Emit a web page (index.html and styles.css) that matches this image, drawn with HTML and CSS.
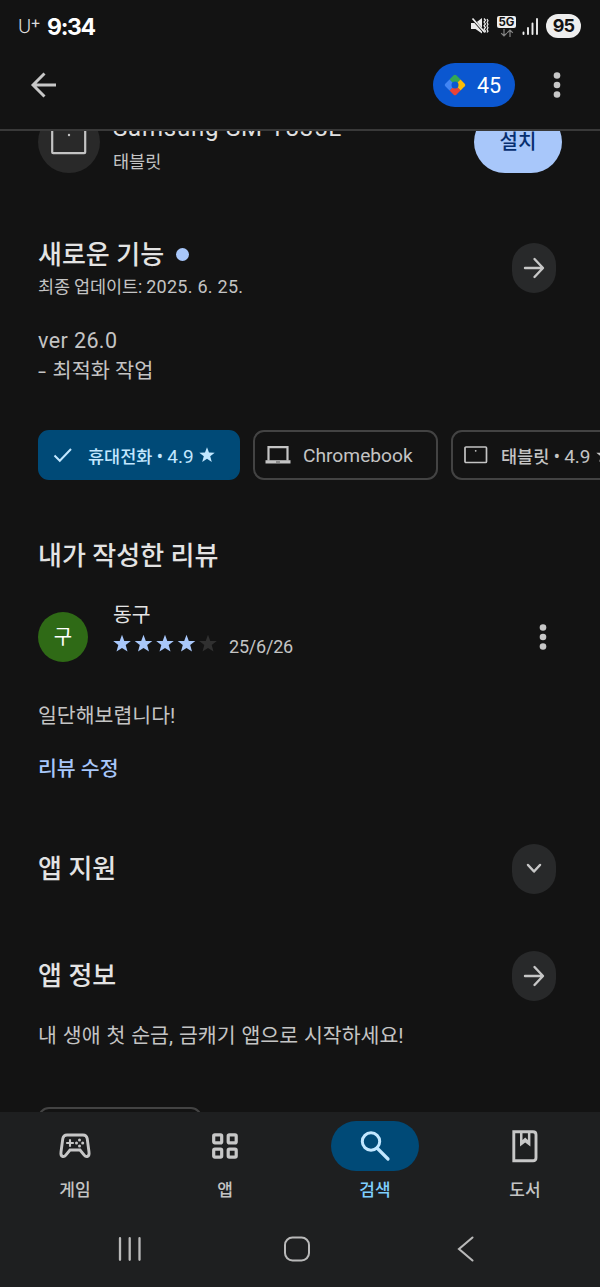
FILE: index.html
```html
<!DOCTYPE html>
<html lang="ko">
<head>
<meta charset="utf-8">
<title>Play 스토어</title>
<link rel="stylesheet" href="styles.css">
</head>
<body>
<header class="status">
  <span class="carrier">U<span class="plus">+</span></span>
  <span class="clock">9:34</span>
  <span class="grow"></span>
  <svg class="mute" width="18" height="18" viewBox="0 0 18 18"><path d="M0 6h4.500L11 1v15.500L4.500 12H0z" fill="#eee"/><path d="M0 0l12.500 14.500" stroke="#131313" stroke-width="2.600"/><path d="M1.500 1.500l12 13.500" stroke="#eee" stroke-width="1.700"/><path d="M13 1.500l1.500 1.800-1.500 1.800 1.500 1.800L13 8.700l1.500 1.800-1.500 1.800 1.500 1.800-1 1.500M16 2l1 1.700-1 1.800 1 1.700L16 9l1 1.700-1 1.800 1 1.700-1 1.300" fill="none" stroke="#eee" stroke-width="1.200"/></svg>
  <span class="net"><span class="net-label">5G</span><svg width="14" height="8" viewBox="0 0 14 8"><path d="M4 0v7M1.200 4.200L4 7l2.800-2.800M10 8V1M7.200 3.800L10 1l2.800 2.800" fill="none" stroke="#858585" stroke-width="1.200"/></svg></span>
  <svg class="signal" width="17" height="17" viewBox="0 0 17 17"><path d="M1.500 14.500v1.500M6 10v6M10.500 5.500V16M15 1v15" stroke="#eee" stroke-width="1.900" stroke-linecap="round"/></svg>
  <span class="battery">95</span>
</header>
<div class="toolbar">
  <svg width="28" height="28" viewBox="0 0 28 28"><path d="M26 14H3M14.500 2.500L3 14l11.500 11.500" fill="none" stroke="#c7c7c7" stroke-width="2.900"/></svg>
  <span class="grow"></span>
  <span class="points">
    <svg width="22" height="22" viewBox="0 0 22 22"><path d="M5.500 5.500L9.700 1.300q1.300-1.300 2.600 0l4.200 4.200L11 11z" fill="#34a853"/><path d="M16.500 5.500l4.200 4.200q1.300 1.300 0 2.600l-4.200 4.200L11 11z" fill="#fbbc04"/><path d="M16.500 16.500l-4.200 4.200q-1.300 1.300-2.600 0l-4.200-4.200L11 11z" fill="#ea4335"/><path d="M5.500 16.500l-4.200-4.200q-1.300-1.300 0-2.600l4.200-4.200L11 11z" fill="#4285f4"/><circle cx="11" cy="11" r="3.500" fill="#0b57d0"/></svg>
    <span>45</span>
  </span>
  <svg class="more" width="8" height="26" viewBox="0 0 8 26"><g fill="#c7c7c7"><circle cx="4" cy="3.500" r="3.300"/><circle cx="4" cy="13" r="3.300"/><circle cx="4" cy="22.500" r="3.300"/></g></svg>
</div>
<main class="content">
  <section class="device">
    <span class="device-icon"><svg width="36" height="28" viewBox="0 0 36 28"><rect x="1.200" y="1.200" width="33" height="25" rx="1" fill="none" stroke="#c4c4c4" stroke-width="2.200"/><circle cx="18" cy="8" r="1.200" fill="#c4c4c4"/></svg></span>
    <div class="device-text"><div class="device-name">Samsung SM-T835L</div><div class="device-kind">태블릿</div></div>
    <span class="install">설치</span>
  </section>
  <section class="whats-new">
    <div class="head-text">
      <h2 class="title">새로운 기능 <i class="dot"></i></h2>
      <div class="updated">최종 업데이트: <span class="updated-date">2025. 6. 25.</span></div>
    </div>
    <span class="round"><svg width="22" height="22" viewBox="0 0 22 22"><path d="M2 11h17.500M11.500 2l8.500 9-8.500 9" fill="none" stroke="#c7c7c7" stroke-width="2.400" stroke-linecap="round" stroke-linejoin="round"/></svg></span>
  </section>
  <div class="notes"><div class="ver">ver 26.0</div><div class="optimize"><span class="dash">-</span>최적화 작업</div></div>
  <div class="chips">
    <span class="chip selected">
      <svg width="20" height="16" viewBox="0 0 20 16"><path d="M1.500 8.500l5.300 5.300L18 2" fill="none" stroke="#c2e7ff" stroke-width="2"/></svg>
      <span class="chip-phone">휴대전화 • <span class="score">4.9</span></span>
      <svg class="chip-star" width="16" height="16" viewBox="0 0 16 16"><path d="M8 .3l2 5.300 5.700.2-4.500 3.500 1.600 5.600L8 11.700l-4.800 3.200 1.600-5.600L.3 5.800 6 5.600z" fill="#c2e7ff"/></svg>
    </span>
    <span class="chip chrome">
      <svg width="26" height="20" viewBox="0 0 26 20"><path d="M3.500 15.500V2.200h19v13.300" fill="none" stroke="#c4c4c4" stroke-width="2.200"/><path d="M.5 15.200h25v3.300H.5z" fill="#c4c4c4"/><path d="M11 17h4" stroke="#555" stroke-width="1"/></svg>
      <span class="chip-chrome">Chromebook</span>
    </span>
    <span class="chip tablet">
      <svg width="24" height="18" viewBox="0 0 24 18"><rect x="1" y="1" width="21.500" height="15.500" rx="1" fill="none" stroke="#c4c4c4" stroke-width="1.700"/><circle cx="11.700" cy="4.800" r=".9" fill="#c4c4c4"/></svg>
      <span class="chip-tablet">태블릿 • <span class="score">4.9</span></span>
      <svg class="chip-star" width="16" height="16" viewBox="0 0 16 16"><path d="M8 .3l2 5.300 5.700.2-4.500 3.500 1.600 5.600L8 11.700l-4.800 3.200 1.600-5.600L.3 5.800 6 5.600z" fill="#c4c4c4"/></svg>
    </span>
  </div>
  <h2 class="title my-review">내가 작성한 리뷰</h2>
  <section class="review">
    <span class="avatar">구</span>
    <div class="who">
      <div class="name">동구</div>
      <div class="rating">
        <svg width="104" height="20" viewBox="0 0 104 20"><defs><path id="star" d="M9 .8l2.300 6.100 6.500.2-5.100 4 1.800 6.400L9 13.900l-5.500 3.600 1.800-6.400-5.100-4 6.500-.2z"/></defs><g fill="#a8c7fa"><use href="#star"/><use href="#star" x="21.500"/><use href="#star" x="43"/><use href="#star" x="64.500"/></g><use href="#star" x="86" fill="#303030"/></svg>
        <span class="date">25/6/26</span>
      </div>
    </div>
    <svg class="more" width="8" height="26" viewBox="0 0 8 26"><g fill="#c7c7c7"><circle cx="4" cy="3.500" r="3.300"/><circle cx="4" cy="13" r="3.300"/><circle cx="4" cy="22.500" r="3.300"/></g></svg>
  </section>
  <p class="comment">일단해보렵니다!</p>
  <a class="edit">리뷰 수정</a>
  <section class="row support"><h2 class="title">앱 지원</h2><span class="round"><svg width="18" height="12" viewBox="0 0 18 12"><path d="M3 2l6 6.500L15 2" fill="none" stroke="#c7c7c7" stroke-width="2.500" stroke-linecap="round" stroke-linejoin="round"/></svg></span></section>
  <section class="row about"><h2 class="title">앱 정보</h2><span class="round"><svg width="22" height="22" viewBox="0 0 22 22"><path d="M2 11h17.500M11.500 2l8.500 9-8.500 9" fill="none" stroke="#c7c7c7" stroke-width="2.400" stroke-linecap="round" stroke-linejoin="round"/></svg></span></section>
  <p class="desc">내 생애 첫 순금, 금캐기 앱으로 시작하세요!</p>
  <span class="tag"></span>
</main>
<footer class="bottom">
  <nav class="tabs">
    <div class="tab"><span class="pill"><svg width="34" height="28" viewBox="0 0 34 28"><path d="M9 3h16q3.500 0 4.200 3.500L31 20q.6 4-1.800 4.500-1.700.3-3-1.400L22 18H12l-4.200 5.100q-1.300 1.700-3 1.400Q2.400 24 3 20L4.800 6.500Q5.500 3 9 3z" fill="none" stroke="#c7c7c7" stroke-width="2.900"/><path d="M12 7.200v7.600M8.200 11h7.600" stroke="#c7c7c7" stroke-width="2.100"/><g fill="#c7c7c7"><circle cx="21.500" cy="7.900" r="1.500"/><circle cx="21.500" cy="14" r="1.500"/><circle cx="18.500" cy="11" r="1.500"/><circle cx="24.700" cy="11" r="1.500"/></g></svg></span><span class="label">게임</span></div>
    <div class="tab"><span class="pill"><svg width="28" height="28" viewBox="0 0 28 28"><g fill="none" stroke="#c7c7c7" stroke-width="3.200"><rect x="2.700" y="2.900" width="8" height="8" rx="1.200"/><rect x="17.200" y="2.900" width="8" height="8" rx="1.200"/><rect x="2.700" y="17.200" width="8" height="8" rx="1.200"/><rect x="17.200" y="17.200" width="8" height="8" rx="1.200"/></g></svg></span><span class="label">앱</span></div>
    <div class="tab active"><span class="pill"><svg width="32" height="32" viewBox="0 0 32 32"><circle cx="12" cy="11.500" r="8.700" fill="none" stroke="#c2e7ff" stroke-width="3"/><path d="M18 18l11 11" stroke="#c2e7ff" stroke-width="3.200" stroke-linecap="round"/></svg></span><span class="label">검색</span></div>
    <div class="tab"><span class="pill"><svg width="28" height="34" viewBox="0 0 28 34"><path d="M2.800 2.800H22q3 0 3 3v23q0 3-3 3H2.800z" fill="none" stroke="#c7c7c7" stroke-width="2.900"/><path d="M9 2v15.500l5.200-4 5.200 4V2h-2.500v9l-2.700-2.500-2.700 2.500V2z" fill="#c7c7c7"/></svg></span><span class="label">도서</span></div>
  </nav>
  <div class="system">
    <svg width="26" height="26" viewBox="0 0 26 26"><path d="M3 2.200v21.600M12.700 2.200v21.600M22.500 2.200v21.600" stroke="#b9b9b9" stroke-width="2.300" stroke-linecap="round"/></svg>
    <svg class="home" width="28" height="28" viewBox="0 0 28 28"><rect x="2" y="2.500" width="24" height="23" rx="7.500" fill="none" stroke="#b9b9b9" stroke-width="2"/></svg>
    <svg width="20" height="28" viewBox="0 0 20 28"><path d="M16.500 2.500L3 14l13.500 11.500" fill="none" stroke="#b9b9b9" stroke-width="2.100" stroke-linecap="round"/></svg>
  </div>
</footer>
</body>
</html>
```

FILE: styles.css
```css
* { box-sizing: border-box; }
body {
  margin: 0; width: 600px; height: 1287px; overflow: hidden;
  display: flex; flex-direction: column;
  background: #131313; color: #c4c4c4;
  font-family: Roboto, "Noto Sans CJK KR", sans-serif;
  white-space: nowrap;
}
svg { display: block; flex: none; }
h2, p { margin: 0; }
.grow { flex: 1; }

.status { height: 52px; flex: none; display: flex; align-items: center; padding: 0 19px 0 18px; color: #fff; }
.carrier { font: 300 18px/28px Inter, sans-serif; color: #ddd; width: 29px; padding-top: 2px; }
.plus { font-size: 16px; font-weight: 400; vertical-align: 5px; line-height: 1; margin-left: -1px; }
.clock { font: 700 23px/28px Inter, sans-serif; letter-spacing: -1.300px; padding-top: 1px; }
.mute { margin-right: 8px; }
.net { display: flex; flex-direction: column; align-items: center; gap: 1px; margin-right: 6px; }
.net-label { width: 19px; height: 12px; border-radius: 2px; background: #eee; color: #131313; font: 700 11.500px/12px Inter, sans-serif; text-align: center; }
.signal { margin-right: 7px; }
.battery { width: 35px; height: 24px; border-radius: 12px; background: #eee; color: #131313; font: 700 18px/24px Inter, sans-serif; letter-spacing: -.8px; text-align: center; }

.toolbar { height: 79px; flex: none; display: flex; align-items: center; padding: 1px 39px 12px 30px; border-bottom: 2px solid #393939; }
.points { width: 82px; height: 44px; border-radius: 22px; background: #0b57d0; color: #fff; display: flex; align-items: center; padding-left: 11px; gap: 11px; font-size: 21.500px; margin-right: 38px; }

.content { flex: 1; min-height: 0; overflow: hidden; display: flex; flex-direction: column; padding-left: 38px; }
.device { display: flex; flex: none; height: 62px; margin: -20px 38px 0 0; }
.device-icon { width: 62px; height: 62px; border-radius: 50%; background: #292929; display: flex; align-items: center; justify-content: center; padding-bottom: 2px; }
.device-text { flex: 1; padding-left: 13px; }
.device-name { font-size: 24px; line-height: 30px; margin-top: 2px; color: #e0e0e0; letter-spacing: .8px; }
.device-kind { font-size: 17.500px; line-height: 26px; margin-top: 6px; }
.install { width: 88px; height: 62px; border-radius: 31px; background: #a8c7fa; color: #062e6f; font-size: 20px; font-weight: 500; line-height: 62px; text-align: center; }

.title { font-size: 26px; font-weight: 500; line-height: 36px; color: #e3e3e3; }
.round { width: 44px; height: 50px; border-radius: 22px; background: #28292a; display: flex; align-items: center; justify-content: center; flex: none; }
.whats-new { display: flex; justify-content: space-between; flex: none; height: 63px; margin: 63px 44px 0 0; }
.whats-new .round { margin-top: 7px; }
.whats-new .title { padding-top: 1px; }
.dot { display: inline-block; width: 13px; height: 13px; border-radius: 50%; background: #a8c7fa; margin-left: 5px; vertical-align: 3px; }
.updated { font-size: 17.500px; line-height: 28px; letter-spacing: -.15px; }
.updated-date { font-size: 18px; letter-spacing: .26px; }
.notes { flex: none; height: 62px; margin-top: 25px; font-size: 20.500px; line-height: 31px; }
.ver { font-size: 21.500px; letter-spacing: .4px; padding-top: 1px; }
.optimize { font-size: 20.800px; }
.dash { display: inline-block; width: 14.500px; transform: scaleX(1.4); transform-origin: left; }
.chips { display: flex; flex: none; gap: 13px; margin-top: 44px; width: 700px; }
.chip { height: 50px; border: 2px solid #434343; border-radius: 11px; display: flex; align-items: center; font-size: 17.500px; font-weight: 500; }
.score { font-size: 19px; font-weight: 400; }
.selected { width: 202px; padding-left: 13px; background: #004a77; border-color: #004a77; color: #c2e7ff; }
.chip-phone { margin-left: 15px; }
.chip-star { margin-left: 5px; }
.chrome { width: 185px; padding-left: 10px; }
.chip-chrome { margin-left: 12px; font-size: 19.200px; font-weight: 400; }
.tablet { width: 210px; padding-left: 11px; }
.chip-tablet { margin-left: 13px; }
.my-review { margin-top: 58px; }
.review { display: flex; flex: none; height: 65px; margin: 27px 53px 0 0; align-items: flex-start; }
.avatar { width: 50px; height: 50px; margin-top: 11px; border-radius: 50%; background: #2f6a16; color: #fff; font-size: 20px; line-height: 50px; text-align: center; }
.who { flex: 1; padding-left: 25px; }
.name { font-size: 20.500px; line-height: 28px; color: #e3e3e3; }
.rating { display: flex; padding-top: 5px; }
.date { font-size: 18px; line-height: 25px; margin-left: 12px; letter-spacing: -.2px; }
.review .more { margin-top: 23px; }
.comment { flex: none; font-size: 20.500px; line-height: 30px; margin-top: 35px; }
.edit { flex: none; font-size: 20.500px; font-weight: 500; line-height: 30px; margin-top: 23px; color: #a8c7fa; }
.row { display: flex; flex: none; align-items: center; justify-content: space-between; height: 50px; margin-right: 44px; }
.support { margin-top: 60px; }
.about { margin-top: 57px; }
.desc { flex: none; font-size: 20.500px; line-height: 30px; margin-top: 20px; word-spacing: .85px; }
.tag { flex: none; width: 164px; height: 50px; border: 2px solid #434343; border-radius: 11px; margin-top: 56px; }

.bottom { flex: none; height: 175px; background: #1e1f20; }
.tabs { display: grid; grid-template-columns: repeat(4, 150px); padding-top: 9px; }
.tab { display: flex; flex-direction: column; align-items: center; }
.pill { width: 88px; height: 50px; border-radius: 25px; display: flex; align-items: center; justify-content: center; }
.label { font-size: 17px; font-weight: 500; line-height: 26px; margin-top: 6px; }
.active .pill { background: #004a77; }
.active .label { color: #7fcfff; }
.system { display: flex; justify-content: space-between; align-items: center; height: 28px; margin-top: 32px; padding: 0 124px 0 117px; }
.home { margin-right: 5px; }
```
